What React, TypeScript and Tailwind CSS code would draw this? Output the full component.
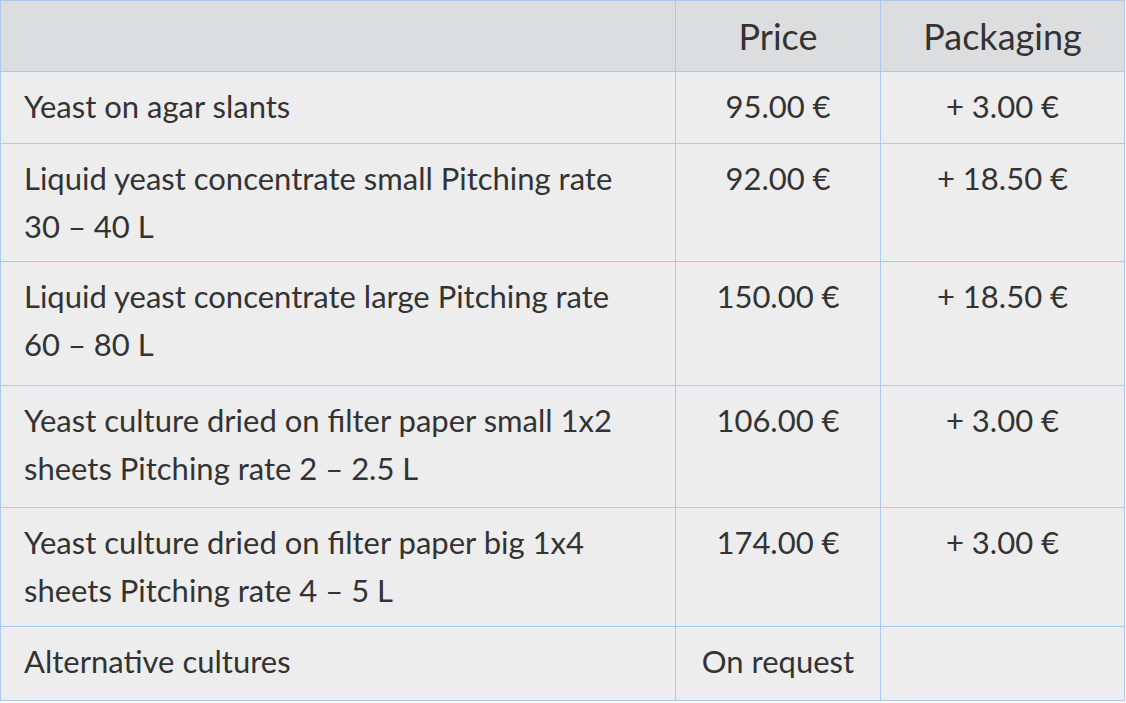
const rows = [
  { name: ["Yeast on agar slants"], price: "95.00 €", pack: "+ 3.00 €", h: "h-[72px]" },
  { name: ["Liquid yeast concentrate small Pitching rate", "30 – 40 L"], price: "92.00 €", pack: "+ 18.50 €", h: "h-[118px]" },
  { name: ["Liquid yeast concentrate large Pitching rate", "60 – 80 L"], price: "150.00 €", pack: "+ 18.50 €", h: "h-[124px]" },
  { name: ["Yeast culture dried on filter paper small 1x2", "sheets Pitching rate 2 – 2.5 L"], price: "106.00 €", pack: "+ 3.00 €", h: "h-[122px]" },
  { name: ["Yeast culture dried on filter paper big 1x4", "sheets Pitching rate 4 – 5 L"], price: "174.00 €", pack: "+ 3.00 €", h: "h-[119px]" },
  { name: ["Alternative cultures"], price: "On request", pack: "", h: "h-[74px]" },
];

export default function App() {
  return (
    <div className="w-[1126px] h-[703px] overflow-hidden bg-white" style={{ fontFamily: "Lato, 'Open Sans', sans-serif" }}>
      <table className="w-[1125px] border-collapse text-[#333] text-[31px] leading-[48px] table-fixed">
        <colgroup>
          <col className="w-[675px]" />
          <col className="w-[205px]" />
          <col />
        </colgroup>
        <thead>
          <tr className="bg-[#dcddde] h-[71px] text-[36px]">
            <th className="border border-[#abc8ef]" />
            <th className="border border-[#abc8ef] font-normal text-center">Price</th>
            <th className="border border-[#abc8ef] font-normal text-center">Packaging</th>
          </tr>
        </thead>
        <tbody className="bg-[#ededed]">
          {rows.map((r, i) => (
            <tr key={i} className={r.h}>
              <td className="border border-[#abc8ef] pl-[23px] pr-3 pt-[10px] align-top">
                {r.name.map((l, j) => (
                  <div key={j}>{l}</div>
                ))}
              </td>
              <td className="border border-[#abc8ef] text-center pt-[10px] align-top">{r.price}</td>
              <td className="border border-[#abc8ef] text-center pt-[10px] align-top">{r.pack}</td>
            </tr>
          ))}
        </tbody>
      </table>
    </div>
  );
}
